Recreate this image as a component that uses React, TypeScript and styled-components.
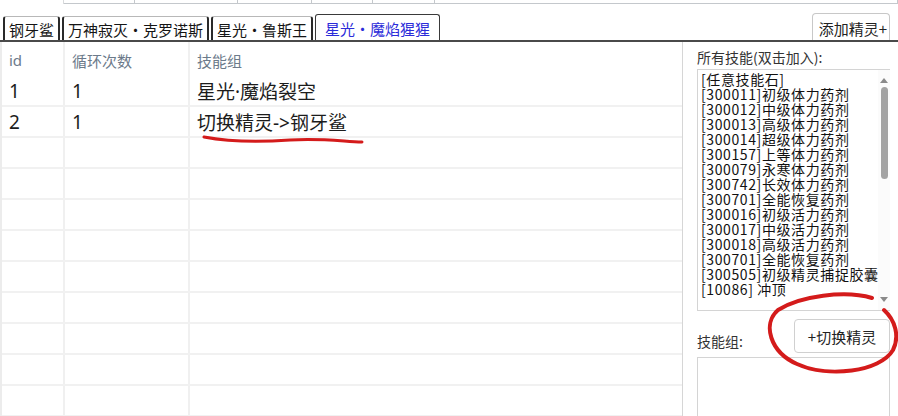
import styled, { createGlobalStyle } from 'styled-components'

const GlobalStyle = createGlobalStyle`
  html, body {
    margin: 0;
    padding: 0;
    background: #ffffff;
  }
  body {
    font-family: 'Noto Sans CJK SC', 'Noto Sans', sans-serif;
    color: #1a1a1a;
  }
`

const tabs = ['钢牙鲨', '万神寂灭・克罗诺斯', '星光・鲁斯王', '星光・魔焰猩猩']
const activeTab = 3

const rows = [
  { id: '1', loops: '1', skills: '星光·魔焰裂空' },
  { id: '2', loops: '1', skills: '切换精灵->钢牙鲨' },
]
const emptyRows = 9

const skillList = [
  '[任意技能石]',
  '[300011]初级体力药剂',
  '[300012]中级体力药剂',
  '[300013]高级体力药剂',
  '[300014]超级体力药剂',
  '[300157]上等体力药剂',
  '[300079]永寒体力药剂',
  '[300742]长效体力药剂',
  '[300701]全能恢复药剂',
  '[300016]初级活力药剂',
  '[300017]中级活力药剂',
  '[300018]高级活力药剂',
  '[300701]全能恢复药剂',
  '[300505]初级精灵捕捉胶囊',
  '[10086] 冲顶',
]

const ghostCells = [64, 71, 103, 74, 61, 62, 463]

const Page = styled.div`
  position: relative;
  width: 898px;
  height: 416px;
  overflow: hidden;
  display: flex;
  flex-direction: column;
`

const GhostStrip = styled.div`
  display: flex;
  height: 4px;
  flex: none;
`

const GhostCell = styled.div<{ $w: number; $first?: boolean }>`
  width: ${(p) => p.$w}px;
  flex: none;
  box-sizing: border-box;
  border-bottom: ${(p) => (p.$first ? 'none' : '1px solid #c4c8cc')};
  border-right: 1px solid ${(p) => (p.$first ? '#d8dadc' : '#c4c8cc')};
`

const TabBar = styled.div`
  display: flex;
  align-items: flex-end;
  height: 38px;
  flex: none;
  padding-left: 3px;
  gap: 2px;
  border-bottom: 2px solid #4a4a4a;
  box-sizing: border-box;
`

const Tab = styled.div<{ $active?: boolean }>`
  height: ${(p) => (p.$active ? 26 : 24)}px;
  padding: ${(p) => (p.$active ? 4 : 3)}px ${(p) => (p.$active ? 9 : 4)}px 0;
  box-sizing: border-box;
  border: 1px solid #b8b8b8;
  border-left: 2px solid #2a2a2a;
  border-right: 2px solid #2a2a2a;
  border-bottom: none;
  border-radius: 3px 3px 0 0;
  font-size: 15px;
  line-height: 20px;
  color: ${(p) => (p.$active ? '#2b2bd9' : '#151515')};
  background: #ffffff;
  white-space: nowrap;
  ${(p) => p.$active && 'border-left-width: 1px; border-right-width: 1px; border-color: #3a3a3a;'}
`

const TabSpacer = styled.div`
  flex: 1;
`

const AddButton = styled.button`
  height: 27px;
  margin-right: 8px;
  padding: 2px 2px 0 6px;
  border: 1px solid #c8c8c8;
  border-bottom: none;
  border-radius: 4px 4px 0 0;
  background: #ffffff;
  font-family: inherit;
  font-size: 15px;
  color: #222;
  cursor: pointer;
`

const Body = styled.div`
  flex: 1;
  display: flex;
  min-height: 0;
`

const TableArea = styled.div`
  width: 683px;
  flex: none;
  box-sizing: border-box;
  border-left: 2px solid #ececec;
  border-right: 1px solid #d6d6d6;
  overflow: hidden;
`

const Row = styled.div<{ $header?: boolean }>`
  display: grid;
  grid-template-columns: 63px 125px 1fr;
  height: ${(p) => (p.$header ? 34 : 31)}px;
  box-sizing: border-box;
  border-bottom: ${(p) => (p.$header ? 'none' : '2px solid #f1f1f1')};
`

const Cell = styled.div<{ $header?: boolean; $last?: boolean }>`
  display: flex;
  align-items: center;
  padding-left: 7px;
  border-right: ${(p) => (p.$last ? 'none' : '2px solid #f0f0f0')};
  font-family: 'Noto Sans', 'Noto Sans CJK SC', sans-serif;
  font-size: ${(p) => (p.$header ? 15 : 19)}px;
  color: ${(p) => (p.$header ? '#6c7a8a' : '#1c1c1c')};
  white-space: nowrap;
  padding-top: ${(p) => (p.$header ? 2 : 0)}px;
`

const Side = styled.div`
  flex: 1;
  display: flex;
  flex-direction: column;
  padding: 6px 8px 0 14px;
  min-width: 0;
`

const Label = styled.div`
  font-size: 14px;
  line-height: 18px;
  color: #333;
  white-space: nowrap;
`

const ListBox = styled.div`
  margin-top: 3px;
  height: 242px;
  display: flex;
  border: 1px solid #d4d4d4;
  border-right: none;
  box-sizing: border-box;
  overflow: hidden;
`

const ListItems = styled.div`
  flex: 1;
  min-width: 0;
  padding: 2px 0 0 3px;
  overflow: hidden;
`

const ListItem = styled.div`
  font-size: 14px;
  line-height: 15px;
  height: 15px;
  color: #111;
  white-space: nowrap;
  letter-spacing: 0.6px;
`

const ScrollBar = styled.div`
  width: 12px;
  flex: none;
  display: flex;
  flex-direction: column;
  align-items: center;
  padding: 8px 0 8px;
  box-sizing: border-box;
  background: #fbfbfb;
`

const Arrow = styled.div<{ $down?: boolean }>`
  width: 0;
  height: 0;
  border-left: 4px solid transparent;
  border-right: 4px solid transparent;
  ${(p) => (p.$down ? 'border-top: 5px solid #8a8a8a;' : 'border-bottom: 5px solid #8a8a8a;')}
`

const Thumb = styled.div`
  width: 7px;
  height: 92px;
  margin-top: 4px;
  border-radius: 4px;
  background: #a3a3a3;
`

const ScrollGap = styled.div`
  flex: 1;
`

const GroupHeader = styled.div`
  display: flex;
  align-items: flex-end;
  justify-content: space-between;
  margin-top: 8px;
`

const GroupLabel = styled(Label)`
  padding-bottom: 3px;
`

const SwitchButton = styled.button`
  width: 96px;
  height: 34px;
  border: 1px solid #d0d0d0;
  border-radius: 4px;
  background: #ffffff;
  font-family: inherit;
  font-size: 15px;
  color: #222;
  cursor: pointer;
`

const GroupBox = styled.div`
  margin-top: 4px;
  flex: 1;
  border: 1px solid #d4d4d4;
  border-bottom: none;
`

const Annotations = styled.svg`
  position: absolute;
  left: 0;
  top: 0;
  pointer-events: none;
`

export default function App() {
  return (
    <>
      <GlobalStyle />
      <Page>
        <GhostStrip>
          {ghostCells.map((w, i) => (
            <GhostCell key={i} $w={w} $first={i === 0} />
          ))}
        </GhostStrip>
        <TabBar>
          {tabs.map((t, i) => (
            <Tab key={t} $active={i === activeTab}>
              {t}
            </Tab>
          ))}
          <TabSpacer />
          <AddButton type="button">添加精灵+</AddButton>
        </TabBar>
        <Body>
          <TableArea>
            <Row $header>
              <Cell $header>id</Cell>
              <Cell $header>循环次数</Cell>
              <Cell $header $last>
                技能组
              </Cell>
            </Row>
            {rows.map((r) => (
              <Row key={r.id}>
                <Cell>{r.id}</Cell>
                <Cell>{r.loops}</Cell>
                <Cell $last>{r.skills}</Cell>
              </Row>
            ))}
            {Array.from({ length: emptyRows }).map((_, i) => (
              <Row key={`e${i}`}>
                <Cell />
                <Cell />
                <Cell $last />
              </Row>
            ))}
          </TableArea>
          <Side>
            <Label>所有技能(双击加入):</Label>
            <ListBox>
              <ListItems>
                {skillList.map((s, i) => (
                  <ListItem key={i}>{s}</ListItem>
                ))}
              </ListItems>
              <ScrollBar>
                <Arrow />
                <Thumb />
                <ScrollGap />
                <Arrow $down />
              </ScrollBar>
            </ListBox>
            <GroupHeader>
              <GroupLabel>技能组:</GroupLabel>
              <SwitchButton type="button">+切换精灵</SwitchButton>
            </GroupHeader>
            <GroupBox />
          </Side>
        </Body>
        <Annotations width="898" height="416" viewBox="0 0 898 416">
          <path
            d="M204 137 C 230 142, 262 142, 290 140 C 318 138, 340 141, 362 142"
            fill="none"
            stroke="#d41b1b"
            strokeWidth="3"
            strokeLinecap="round"
          />
          <path
            d="M872 298 C 845 290, 800 296, 778 310 C 762 324, 770 352, 797 364 C 828 378, 880 372, 893 350 C 900 336, 895 320, 884 310"
            fill="none"
            stroke="#d41b1b"
            strokeWidth="4"
            strokeLinecap="round"
          />
        </Annotations>
      </Page>
    </>
  )
}
